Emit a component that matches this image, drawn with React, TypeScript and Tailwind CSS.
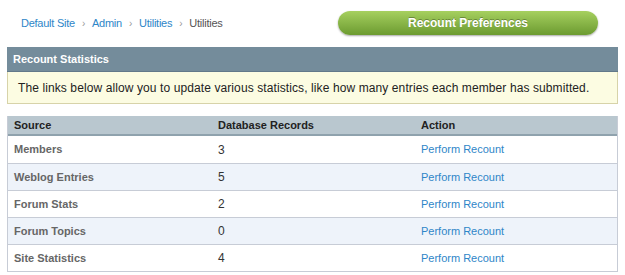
import React from 'react';

const rows = [
  { source: 'Members', count: 3 },
  { source: 'Weblog Entries', count: 5 },
  { source: 'Forum Stats', count: 2 },
  { source: 'Forum Topics', count: 0 },
  { source: 'Site Statistics', count: 4 },
];

export default function App() {
  return (
    <div className="w-[625px] h-[275px] bg-white px-[7px] text-[11px] text-[#333] font-['Liberation_Sans',Arial,sans-serif] overflow-hidden">
      {/* Top bar */}
      <div className="h-[47px] flex items-center justify-between pl-[14px] pr-[20px]">
        <div className="flex items-center gap-[7px] text-[11px] tracking-[-0.25px] pb-[1px]">
          <a className="text-[#2e86c8]">Default Site</a>
          <span className="text-[#999] text-[10px]">›</span>
          <a className="text-[#2e86c8]">Admin</a>
          <span className="text-[#999] text-[10px]">›</span>
          <a className="text-[#2e86c8]">Utilities</a>
          <span className="text-[#999] text-[10px]">›</span>
          <span className="text-[#555]">Utilities</span>
        </div>
        <button className="w-[260px] h-[24px] mb-[1px] rounded-full bg-gradient-to-b from-[#a6d05f] to-[#6c9b30] shadow-[0_1px_2px_rgba(0,0,0,0.35)] text-white font-bold text-[12px] [text-shadow:0_-1px_0_rgba(0,0,0,0.3)]">
          Recount Preferences
        </button>
      </div>

      {/* Panel header */}
      <div className="h-[25px] bg-[#748c9b] border-b border-[#62798a] flex items-center px-[6px] text-white font-bold text-[11px]">
        Recount Statistics
      </div>
      <div className="h-[32px] bg-[#fcfce2] border border-t-0 border-[#d7d3a9] flex items-center px-[10px] text-[12px] tracking-[0.1px] text-[#222]">
        The links below allow you to update various statistics, like how many entries each member has submitted.
      </div>

      {/* Table */}
      <div className="mt-[12px] border-x border-b border-[#c7ccd6]">
        <div className="h-[20px] bg-[#b9c7cf] border-b-2 border-[#8fa2ad] grid grid-cols-[204px_203px_1fr] items-center px-[6px] font-bold text-[#222]">
          <span>Source</span>
          <span>Database Records</span>
          <span>Action</span>
        </div>
        {rows.map((r, i) => (
          <div
            key={r.source}
            className={`h-[27px] grid grid-cols-[204px_203px_1fr] items-center px-[6px] ${i > 0 ? 'border-t border-[#c7ccd6]' : ''} ${i % 2 === 1 ? 'bg-[#eef3fa]' : 'bg-white'}`}
          >
            <span className="font-bold text-[#666]">{r.source}</span>
            <span className="text-[#333] text-[12px]">{r.count}</span>
            <a className="text-[#2e86c8]">Perform Recount</a>
          </div>
        ))}
      </div>
    </div>
  );
}
